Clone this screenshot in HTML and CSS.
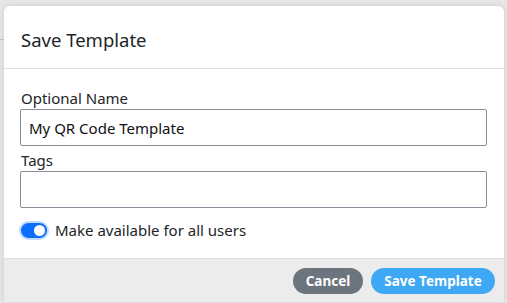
FILE: index.html
```html
<!DOCTYPE html>
<html lang="en">
<head>
    <meta charset="UTF-8">
    <title>Save Template</title>
    <link rel="stylesheet" href="styles.css">
</head>
<body>
    <div class="backdrop-line"></div>
    <div class="modal">
        <div class="modal-header">
            <h2>Save Template</h2>
        </div>

        <div class="modal-body">
            <label class="field-label" for="tplName">Optional Name</label>
            <input id="tplName" class="field-input" type="text" value="My QR Code Template">

            <label class="field-label" for="tplTags">Tags</label>
            <input id="tplTags" class="field-input" type="text">

            <label class="switch-row">
                <span class="switch"><span class="knob"></span></span>
                <span>Make available for all users</span>
            </label>
        </div>

        <div class="modal-footer">
            <button class="btn btn-cancel">Cancel</button>
            <button class="btn btn-save">Save Template</button>
        </div>
    </div>
</body>
</html>
```

FILE: styles.css
```css
body {
    margin: 0;
    padding: 6px 3px 0 4px;
    background-color: #e7e7e7;
    font-family: 'Noto Sans', 'Open Sans', sans-serif;
    color: #212529;
    overflow: hidden;
    height: 303px;
    box-sizing: border-box;
}
.backdrop-line {
    position: absolute;
    left: 0;
    top: 39px;
    width: 4px;
    height: 1px;
    background-color: #a9c6e6;
}
.modal {
    width: 500px;
    background-color: white;
    border-radius: 6px 6px 0 0;
    box-shadow: 0 0 6px rgba(0, 0, 0, 0.12);
}
.modal-header {
    height: 62px;
    padding: 0 17px;
    display: flex;
    align-items: center;
    border-bottom: 1px solid #dde2ea;
}
.modal-header h2 {
    margin: 0;
    font-size: 18.5px;
    font-weight: 400;
    padding-top: 4px;
}
.modal-body {
    padding: 19px 17px 18px 16px;
    display: flex;
    flex-direction: column;
}
.field-label {
    font-size: 15px;
    line-height: 21px;
    padding-left: 1px;
}
.field-input {
    height: 37px;
    box-sizing: border-box;
    border: 1px solid #8d8a9a;
    border-radius: 2px;
    padding: 0 8px;
    font-family: inherit;
    font-size: 15px;
    color: #111;
    margin-bottom: 4px;
}
.switch-row {
    display: flex;
    align-items: center;
    gap: 8px;
    font-size: 15px;
    margin-top: 8px;
}
.switch {
    width: 26px;
    height: 15px;
    border-radius: 8px;
    background-color: #0d6efd;
    box-shadow: 0 0 0 2px #c2dbfe;
    display: flex;
    align-items: center;
    justify-content: flex-end;
    padding: 0 2px;
    box-sizing: border-box;
    margin-left: 1px;
}
.knob {
    width: 11px;
    height: 11px;
    border-radius: 50%;
    background-color: white;
}
.modal-footer {
    height: 43px;
    background-color: #ececec;
    border-top: 1px solid #dcdcdc;
    display: flex;
    justify-content: flex-end;
    align-items: center;
    gap: 8px;
    padding-right: 9px;
}
.btn {
    border: none;
    height: 26px;
    border-radius: 13px;
    color: white;
    font-family: inherit;
    font-weight: bold;
    font-size: 13.5px;
    padding: 0;
    white-space: nowrap;
    cursor: pointer;
}
.btn-cancel {
    background-color: #6c757d;
    width: 70px;
}
.btn-save {
    background-color: #3ea8f4;
    width: 124px;
}
```
